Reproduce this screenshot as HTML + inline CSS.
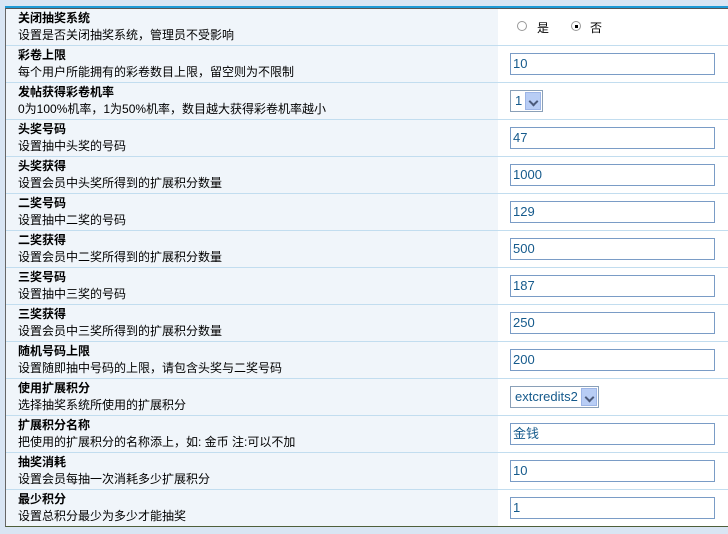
<!DOCTYPE html>
<html><head><meta charset="utf-8"><style>
body{margin:0;background:#d9e5f3;width:728px;height:534px;overflow:hidden;font-family:"Liberation Sans","Noto Sans CJK SC",sans-serif;font-size:12px;}
.wrap{position:absolute;left:5px;top:6px;width:740px;border-top:2px solid #1e9ad6;}
.tbl{border-top:1px solid #555;border-left:1px solid #666;border-bottom:1px solid #4f5f3a;background:#fff;}
.row{height:36px;border-bottom:1px solid #c2ddef;position:relative;}
.row:last-child{border-bottom:none;}
.l{position:absolute;left:0;top:0;width:492px;height:36px;background:#f0f5fa;}
.t{position:absolute;left:12px;top:2px;font-weight:bold;color:#000;line-height:14px;}
.d{position:absolute;left:12px;top:19px;color:#000;line-height:14px;}
.in{position:absolute;left:504px;top:7px;width:202px;height:20px;border:1px solid #7a9cc6;background:#fff;color:#155a8c;font-size:13px;line-height:20px;padding-left:2px;box-sizing:border-box;width:205px;height:22px;}
.sel{position:absolute;left:504px;top:7px;height:22px;border:1px solid #8aa0b8;background:#fff;color:#155a8c;font-size:13px;line-height:20px;box-sizing:border-box;padding-left:4px;padding-right:20px;}
.sel i{position:absolute;right:1px;top:1px;width:16px;height:18px;background:#b8cdf5;border:1px solid #9db5e6;box-sizing:border-box;}
.sel i:after{content:"";position:absolute;left:4px;top:5px;width:5px;height:5px;border-right:2px solid #4b5a7a;border-bottom:2px solid #4b5a7a;transform:rotate(45deg);}
.radio{position:absolute;top:12px;width:10px;height:10px;border:1px solid #999;border-radius:50%;background:#fff;box-sizing:border-box;}
.rl{position:absolute;top:10px;}
</style></head><body>
<div class="wrap"><div class="tbl">
<div class="row"><div class="l"></div><div class="t">关闭抽奖系统</div><div class="d">设置是否关闭抽奖系统，管理员不受影响</div>
<div class="radio" style="left:511px"></div><div class="rl" style="left:531px">是</div>
<div class="radio" style="left:565px"><div style="position:absolute;left:3px;top:3px;width:3px;height:3px;background:#000"></div></div><div class="rl" style="left:584px">否</div></div>
<div class="row"><div class="l"></div><div class="t">彩卷上限</div><div class="d">每个用户所能拥有的彩卷数目上限，留空则为不限制</div><div class="in">10</div></div>
<div class="row"><div class="l"></div><div class="t">发帖获得彩卷机率</div><div class="d">0为100%机率，1为50%机率，数目越大获得彩卷机率越小</div><div class="sel">1<i></i></div></div>
<div class="row"><div class="l"></div><div class="t">头奖号码</div><div class="d">设置抽中头奖的号码</div><div class="in">47</div></div>
<div class="row"><div class="l"></div><div class="t">头奖获得</div><div class="d">设置会员中头奖所得到的扩展积分数量</div><div class="in">1000</div></div>
<div class="row"><div class="l"></div><div class="t">二奖号码</div><div class="d">设置抽中二奖的号码</div><div class="in">129</div></div>
<div class="row"><div class="l"></div><div class="t">二奖获得</div><div class="d">设置会员中二奖所得到的扩展积分数量</div><div class="in">500</div></div>
<div class="row"><div class="l"></div><div class="t">三奖号码</div><div class="d">设置抽中三奖的号码</div><div class="in">187</div></div>
<div class="row"><div class="l"></div><div class="t">三奖获得</div><div class="d">设置会员中三奖所得到的扩展积分数量</div><div class="in">250</div></div>
<div class="row"><div class="l"></div><div class="t">随机号码上限</div><div class="d">设置随即抽中号码的上限，请包含头奖与二奖号码</div><div class="in">200</div></div>
<div class="row"><div class="l"></div><div class="t">使用扩展积分</div><div class="d">选择抽奖系统所使用的扩展积分</div><div class="sel">extcredits2<i></i></div></div>
<div class="row"><div class="l"></div><div class="t">扩展积分名称</div><div class="d">把使用的扩展积分的名称添上，如: 金币 注:可以不加</div><div class="in">金钱</div></div>
<div class="row"><div class="l"></div><div class="t">抽奖消耗</div><div class="d">设置会员每抽一次消耗多少扩展积分</div><div class="in">10</div></div>
<div class="row"><div class="l"></div><div class="t">最少积分</div><div class="d">设置总积分最少为多少才能抽奖</div><div class="in">1</div></div>
</div></div>
</body></html>
